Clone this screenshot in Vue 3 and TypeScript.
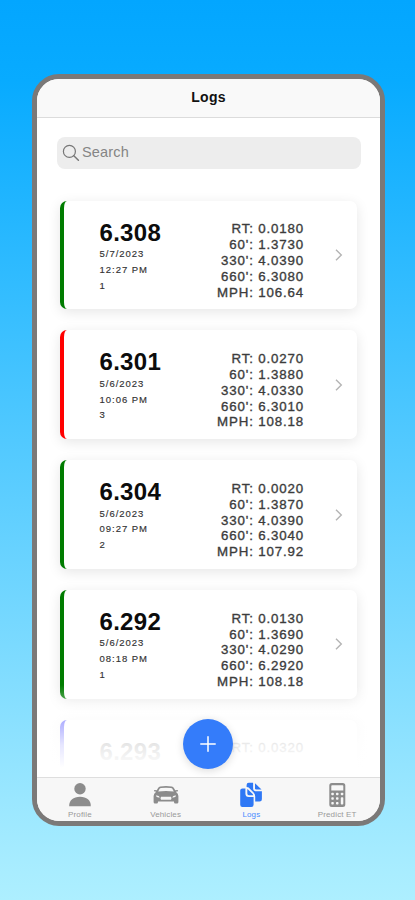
<script setup lang="ts">
interface Log {
  et: string
  date: string
  time: string
  lane: string
  color: string
  stats: string[]
}

const logs: Log[] = [
  { et: '6.308', date: '5/7/2023', time: '12:27 PM', lane: '1', color: 'green', stats: ['RT: 0.0180', "60': 1.3730", "330': 4.0390", "660': 6.3080", 'MPH: 106.64'] },
  { et: '6.301', date: '5/6/2023', time: '10:06 PM', lane: '3', color: 'red', stats: ['RT: 0.0270', "60': 1.3880", "330': 4.0330", "660': 6.3010", 'MPH: 108.18'] },
  { et: '6.304', date: '5/6/2023', time: '09:27 PM', lane: '2', color: 'green', stats: ['RT: 0.0020', "60': 1.3870", "330': 4.0390", "660': 6.3040", 'MPH: 107.92'] },
  { et: '6.292', date: '5/6/2023', time: '08:18 PM', lane: '1', color: 'green', stats: ['RT: 0.0130', "60': 1.3690", "330': 4.0290", "660': 6.2920", 'MPH: 108.18'] },
  { et: '6.293', date: '', time: '', lane: '', color: 'blue', stats: ['RT: 0.0320'] },
]
</script>

<template>
  <div class="backdrop">
    <main class="phone">
      <header class="top">Logs</header>
      <section class="content">
        <label class="search">
          <svg width="18" height="18" viewBox="0 0 18 18" fill="none" stroke="#777" stroke-width="1.2" stroke-linecap="round">
            <circle cx="7.4" cy="7.4" r="6" />
            <path d="M11.8 11.8L16.4 16.2" stroke-width="1.5" />
          </svg>
          <span>Search</span>
        </label>
        <ul class="list">
          <li v-for="log in logs" :key="log.et" class="card" :class="log.color">
            <div class="left">
              <strong>{{ log.et }}</strong>
              <span>{{ log.date }}</span>
              <span>{{ log.time }}</span>
              <span>{{ log.lane }}</span>
            </div>
            <div class="stats">
              <span v-for="s in log.stats" :key="s">{{ s }}</span>
            </div>
            <svg class="chev" width="8" height="14" viewBox="0 0 8 14" fill="none" stroke="#b4b4b4" stroke-width="1.4">
              <path d="M1 1.8L6.3 7L1 12.2" />
            </svg>
          </li>
        </ul>
        <div class="fade"></div>
        <button class="add" aria-label="Add">
          <svg width="18" height="18" viewBox="0 0 18 18" stroke="#fff" stroke-width="1.5" stroke-linecap="round">
            <path d="M9 1.8V16.2M1.8 9H16.2" />
          </svg>
        </button>
      </section>
      <nav class="tabs">
        <a class="tab">
          <svg width="26" height="26" viewBox="0 0 26 26" fill="#8c8c8c">
            <circle cx="13" cy="6.8" r="5.7" />
            <path d="M2.2 24.2C2 18.2 6.4 14.8 13 14.8S24 18.2 23.8 24.2Z" />
          </svg>
          <span>Profile</span>
        </a>
        <a class="tab">
          <svg width="26" height="26" viewBox="0 0 26 26" fill="#8c8c8c">
            <path fill-rule="evenodd" d="M3.2 9.8L1 9.3Q.5 8.2 1.7 8L3.8 8.3L5.1 6Q5.8 4.8 7.2 4.5Q13 3.7 18.8 4.5Q20.2 4.8 20.9 6L22.2 8.3L24.3 8Q25.5 8.2 25 9.3L22.8 9.8Q25.4 11.6 25.4 14V20Q25.4 21.5 24 21.5H22.3Q21 21.5 21 20V19.6H5V20Q5 21.5 3.7 21.5H2Q.6 21.5 .6 20V14Q.6 11.6 3.2 9.8ZM5.2 9.5Q13 8.7 20.8 9.5L19.2 6.6Q18.8 6.1 18 6Q13 5.4 8 6Q7.2 6.1 6.8 6.6ZM2.9 13.6Q3.2 15.8 6.8 15.4Q6 13.2 2.9 13.6ZM23.1 13.6Q20 13.2 19.2 15.4Q22.8 15.8 23.1 13.6ZM8 14.7Q7 16.2 8 17.7H18Q19 16.2 18 14.7Z" />
          </svg>
          <span>Vehicles</span>
        </a>
        <a class="tab active">
          <svg width="26" height="26" viewBox="0 0 26 26" fill="#2f78f5">
            <path d="M8.6 3Q8.6 .8 10.8 .8H15.1V6.3Q15.1 9.2 18 9.2H23.9V17.3Q23.9 19.6 21.6 19.6H17.2V14.4Q17.2 12.3 15.6 10.6L10.7 5.6Q9.7 4.8 8.6 4.9Z" />
            <path d="M17 1.2L23.5 7.5H18.3Q17 7.5 17 6.3Z" />
            <path d="M2.2 8.6Q2.2 6.4 4.4 6.4H7.4V11.4Q7.4 14.9 10.8 14.9H15.6V22.7Q15.6 25 13.3 25H4.4Q2.2 25 2.2 22.7Z" />
            <path d="M9.3 6.9Q9.6 7 10 7.4L14.4 11.8Q15.1 12.5 15.2 13.2H10.9Q9.3 13.2 9.3 11.6Z" />
          </svg>
          <span>Logs</span>
        </a>
        <a class="tab">
          <svg width="26" height="26" viewBox="0 0 26 26" fill="#8c8c8c">
            <path fill-rule="evenodd" d="M7.8 1H18.8Q21.3 1 21.3 3.5V22.4Q21.3 24.9 18.8 24.9H7.8Q5.3 24.9 5.3 22.4V3.5Q5.3 1 7.8 1ZM7.3 4V8.6H19.3V4Q19.3 3.2 18.5 3.2H8.1Q7.3 3.2 7.3 4Z" />
            <g fill="#f7f7f7">
              <rect x="7.3" y="10.7" width="2.5" height="2.5" rx=".8" />
              <rect x="12" y="10.7" width="2.5" height="2.5" rx=".8" />
              <rect x="16.8" y="10.7" width="2.5" height="2.5" rx=".8" />
              <rect x="7.3" y="15.3" width="2.5" height="2.5" rx=".8" />
              <rect x="12" y="15.3" width="2.5" height="2.5" rx=".8" />
              <rect x="7.3" y="20" width="2.5" height="2.5" rx=".8" />
              <rect x="12" y="20" width="2.5" height="2.5" rx=".8" />
              <rect x="16.8" y="15.3" width="2.5" height="7.2" rx=".8" />
            </g>
          </svg>
          <span>Predict ET</span>
        </a>
      </nav>
    </main>
  </div>
</template>

<style>
body {
  margin: 0;
}
</style>

<style scoped>
.backdrop {
  box-sizing: border-box;
  height: 900px;
  padding: 74px 30px 0 32px;
  overflow: hidden;
  background: linear-gradient(#03a6ff 0, #08abff 9%, #a9edff 97%, #adefff 100%);
  font-family: "Liberation Sans", Arial, sans-serif;
}
.phone {
  box-sizing: border-box;
  height: 752px;
  display: flex;
  flex-direction: column;
  border: 5px solid #7b7978;
  border-radius: 27px;
  background: #fff;
  overflow: hidden;
}
.top {
  box-sizing: border-box;
  flex: 0 0 39px;
  border-bottom: 1px solid #dcdcdc;
  background: #f9f9f9;
  text-align: center;
  font-size: 14px;
  line-height: 37px;
  font-weight: bold;
  letter-spacing: 0.3px;
  color: #111;
}
.content {
  position: relative;
  flex: 1;
  min-height: 0;
  overflow: hidden;
  padding: 19px 19px 0 20px;
}
.search {
  display: flex;
  align-items: center;
  gap: 2.5px;
  height: 32px;
  padding-left: 4.5px;
  border-radius: 8px;
  background: #ededed;
  color: #858585;
  font-size: 14.5px;
  line-height: 30px;
  letter-spacing: 0.15px;
}
.search span {
  height: 32px;
}
.list {
  list-style: none;
  margin: 31.5px 4px 0 3px;
  padding: 0;
  display: flex;
  flex-direction: column;
  gap: 21px;
}
.card {
  box-sizing: border-box;
  height: 108.8px;
  display: flex;
  border-left: 4px solid #007c00;
  border-radius: 7px;
  padding: 20px 14px 0 35.5px;
  background: #fff;
  box-shadow: 0 3px 13px rgba(0, 0, 0, 0.1);
}
.card.red {
  border-left-color: #f00;
}
.card.blue {
  border-left-color: #00f;
}
.left {
  display: flex;
  flex-direction: column;
  flex: 1;
}
.left strong {
  font-size: 24px;
  line-height: 24.6px;
  letter-spacing: 0.3px;
  color: #0c0c0c;
}
.left span {
  height: 15.8px;
  font-size: 9.5px;
  line-height: 17px;
  letter-spacing: 0.98px;
  color: #333;
  -webkit-text-stroke: 0.15px #333;
}
.stats {
  display: flex;
  flex-direction: column;
  align-items: flex-end;
  padding-top: 0.8px;
  font-size: 13.3px;
  line-height: 15.85px;
  letter-spacing: 0.85px;
  color: #3c3c3c;
  -webkit-text-stroke: 0.35px #3c3c3c;
}
.chev {
  margin: 27.5px 0 0 31px;
}
.fade {
  position: absolute;
  left: 0;
  right: 0;
  bottom: 0;
  height: 92px;
  background: linear-gradient(rgba(255, 255, 255, 0), rgba(255, 255, 255, 0.65) 35%, rgba(255, 255, 255, 0.9) 65%, #fff 90%);
}
.add {
  position: absolute;
  left: 146px;
  bottom: 8px;
  width: 50px;
  height: 50px;
  display: grid;
  place-items: center;
  padding: 0;
  border: 0;
  border-radius: 50%;
  background: #347cfa;
  box-shadow: 0 2px 8px rgba(0, 0, 0, 0.14);
}
.tabs {
  box-sizing: border-box;
  flex: 0 0 44px;
  display: flex;
  border-top: 1px solid #dedede;
  background: #f7f7f7;
}
.tab {
  flex: 1;
  display: flex;
  flex-direction: column;
  align-items: center;
  padding-top: 4px;
  color: #999;
  font-size: 8px;
  line-height: 9px;
  letter-spacing: 0.15px;
}
.tab svg {
  flex: none;
}
.tab span {
  margin-top: 2px;
}
.tab.active {
  color: #4a8bff;
}
</style>
